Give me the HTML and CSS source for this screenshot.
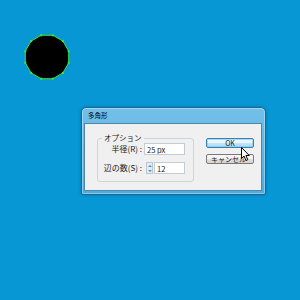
FILE: index.html
```html
<!DOCTYPE html>
<html lang="ja">
<head>
    <meta charset="UTF-8">
    <title>多角形</title>
    <link rel="stylesheet" href="styles.css">
</head>
<body>
    <div class="artboard">
        <svg class="polygon" width="50" height="50" viewBox="0 0 50 50">
            <polygon points="30.82,3.27 40.91,9.09 46.73,19.18 46.73,30.82 40.91,40.91 30.82,46.73 19.18,46.73 9.09,40.91 3.27,30.82 3.27,19.18 9.09,9.09 19.18,3.27"
                     fill="#000" stroke="#3ee63e" stroke-width="1"/>
            <g fill="#3ee63e">
                <rect x="29.8" y="2.3" width="2" height="2"/>
                <rect x="39.9" y="8.1" width="2" height="2"/>
                <rect x="45.7" y="18.2" width="2" height="2"/>
                <rect x="45.7" y="29.8" width="2" height="2"/>
                <rect x="39.9" y="39.9" width="2" height="2"/>
                <rect x="29.8" y="45.7" width="2" height="2"/>
                <rect x="18.2" y="45.7" width="2" height="2"/>
                <rect x="8.1" y="39.9" width="2" height="2"/>
                <rect x="2.3" y="29.8" width="2" height="2"/>
                <rect x="2.3" y="18.2" width="2" height="2"/>
                <rect x="8.1" y="8.1" width="2" height="2"/>
                <rect x="18.2" y="2.3" width="2" height="2"/>
            </g>
        </svg>

        <div class="dialog">
            <div class="titlebar">多角形</div>
            <div class="client">
                <fieldset class="group">
                    <legend>オプション</legend>
                    <div class="field">
                        <label for="radius">半径(R) :</label>
                        <input class="text-input" id="radius" type="text" value="25 px">
                    </div>
                    <div class="field">
                        <label for="sides">辺の数(S) :</label>
                        <div class="spin-field">
                            <div class="spinner">
                                <span class="spin up"></span>
                                <span class="spin down"></span>
                            </div>
                            <input class="text-input" id="sides" type="text" value="12">
                        </div>
                    </div>
                </fieldset>
                <div class="buttons">
                    <button class="btn btn-default">OK</button>
                    <button class="btn">キャンセル</button>
                </div>
            </div>
        </div>

        <svg class="cursor" width="10" height="15" viewBox="0 0 10 15">
            <polygon points="0.5,0.5 0.5,11.5 3,9 5,13.5 6.8,12.7 4.9,8.5 8.3,8.5" fill="#fff" stroke="#000" stroke-width="1" stroke-linejoin="round"/>
        </svg>
    </div>
</body>
</html>
```

FILE: styles.css
```css
body {
    margin: 0;
    padding: 0;
    background: #0797d5;
    font-family: "Noto Sans CJK JP", "Noto Sans", sans-serif;
    color: #1a1a1a;
}

.artboard {
    position: relative;
    width: 300px;
    height: 300px;
    overflow: hidden;
}

.polygon {
    position: absolute;
    left: 22px;
    top: 32px;
}

.cursor {
    position: absolute;
    left: 241px;
    top: 147px;
}

.dialog {
    position: absolute;
    left: 81px;
    top: 107px;
    width: 185px;
    height: 88px;
    box-sizing: border-box;
    display: flex;
    flex-direction: column;
    padding: 0 3px 3px 2px;
    background: linear-gradient(to bottom, #72c0e8, #4eacde);
    border: 1px solid #25668f;
    border-radius: 5px 5px 2px 2px;
    box-shadow: inset 0 0 0 1px rgba(255, 255, 255, 0.35), 0 0 3px rgba(0, 40, 80, 0.35);
}

.titlebar {
    height: 15px;
    padding-left: 4px;
    font-size: 6.5px;
    line-height: 15px;
    color: #000;
}

.client {
    flex: 1;
    display: flex;
    align-items: flex-start;
    gap: 12px;
    padding: 10px 0 0 12px;
    background: #f0f0f0;
    border: 1px solid #4f86ad;
}

.group {
    box-sizing: border-box;
    width: 97px;
    height: 48px;
    margin: 0;
    padding: 1px 8px 0 0;
    border: 1px solid #cbd5dc;
    border-radius: 3px;
    display: flex;
    flex-direction: column;
    gap: 7px;
}

.group legend {
    margin-left: 4px;
    padding: 0 2px;
    font-size: 7.5px;
    line-height: 8px;
}

.field {
    display: flex;
    align-items: center;
    justify-content: flex-end;
    gap: 2px;
    font-size: 8px;
    line-height: 12px;
}

.field label {
    white-space: nowrap;
}

.text-input {
    box-sizing: border-box;
    width: 41px;
    height: 12px;
    margin: 0;
    padding: 0 2px;
    border: 1px solid #c4cbd2;
    background: #fff;
    font-family: inherit;
    font-size: 7.5px;
    color: #1a1a1a;
}

.spin-field {
    display: flex;
    gap: 1px;
    margin-left: 2px;
}

.spin-field .text-input {
    width: 31px;
}

.spinner {
    width: 7px;
    height: 12px;
    display: flex;
    flex-direction: column;
    border: 1px solid #b7c7d6;
    box-sizing: border-box;
    background: #e3ebf2;
}

.spin {
    flex: 1;
    display: flex;
    align-items: center;
    justify-content: center;
}

.spin.up::before {
    content: "";
    border-left: 2px solid transparent;
    border-right: 2px solid transparent;
    border-bottom: 2px solid #6a8aa8;
}

.spin.down::before {
    content: "";
    border-left: 2px solid transparent;
    border-right: 2px solid transparent;
    border-top: 2px solid #6a8aa8;
}

.buttons {
    display: flex;
    flex-direction: column;
    gap: 6px;
    padding-top: 4px;
}

.btn {
    box-sizing: border-box;
    width: 48px;
    height: 10px;
    padding: 0;
    border: 1px solid #7a7a7a;
    border-radius: 2px;
    background: linear-gradient(to bottom, #f4f4f4 50%, #e0e0e0 50%, #d4d4d4);
    font-family: inherit;
    font-size: 7px;
    line-height: 8px;
    color: #1a1a1a;
    text-align: left;
    text-indent: 4px;
}

.btn-default {
    text-align: center;
    text-indent: 0;
    border-color: #3c7fb1;
    background: linear-gradient(to bottom, #eaf6fd 50%, #c6e6f8 50%, #a7d9f5);
    box-shadow: inset 0 0 0 1px rgba(120, 200, 240, 0.6);
}
```
